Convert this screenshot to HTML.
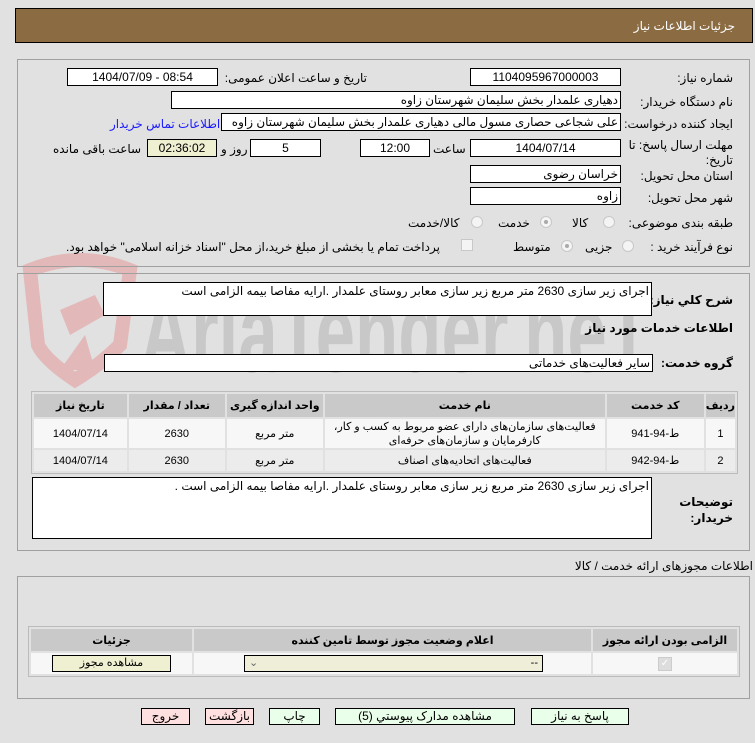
<!DOCTYPE html>
<html><head><meta charset="utf-8"><style>
body{margin:0;width:755px;height:743px;background:#e1e1e1;font-family:"Liberation Sans","DejaVu Sans",sans-serif;font-size:12px;color:#000;position:relative;overflow:hidden}
.a{position:absolute;white-space:nowrap}
.r{direction:rtl;text-align:right}
.box{position:absolute;background:#fff;border:1px solid #000;box-sizing:border-box;height:18px;line-height:16px;font-size:12px;white-space:nowrap;overflow:hidden}
.c{text-align:center}
.panel{position:absolute;border:1px solid #a0a0a0;box-sizing:border-box;left:17px;width:733px}
.lbl{position:absolute;direction:rtl;white-space:nowrap;font-size:12px}
.b{font-weight:bold;font-size:12px}
.rad{position:absolute;width:12px;height:12px;border-radius:50%;border:1px solid #c8c8c8;background:#f4f4f4;box-sizing:border-box}
.rad.on::after{content:"";position:absolute;left:3px;top:3px;width:4px;height:4px;border-radius:50%;background:#aaa}
table{border-collapse:separate;border-spacing:2px;position:absolute;font-size:11px}
td,th{padding:0;text-align:center}
th{background:#c9c9c9;font-weight:bold}
.btn{position:absolute;top:708px;height:17px;border:1px solid #000;box-sizing:border-box;line-height:15px;text-align:center;font-size:12px;background:#eaffea}
.pk{background:#ffe0e0}
</style></head><body>
<svg class="a" style="left:0;top:250px" width="700" height="140">
<path d="M30 20 Q80 0 130 20 L120 95 Q100 115 75 130 Q45 110 38 95 Z" fill="none" stroke="#e2b8b8" stroke-width="14"/>
<path d="M60 60 L95 45 L105 65 L70 85 Z" fill="#e2b8b8"/>
<path d="M85 85 L60 120 L95 120 Z" fill="#e2b8b8"/>
<text x="140" y="122" font-family="Liberation Sans Narrow, Liberation Sans, sans-serif" font-weight="bold" font-size="115" fill="#c8c8c8" textLength="510" lengthAdjust="spacingAndGlyphs">AriaTender.neT</text>
</svg>

<div class="a" style="left:15px;top:8px;width:738px;height:35px;background:#8b6b42;border:1px solid #000;box-sizing:border-box"></div>
<div class="a r" style="right:20px;top:19px;color:#fff;font-size:12px">جزئیات اطلاعات نیاز</div>

<div class="panel" style="top:59px;height:208px"></div>
<div class="lbl" style="right:22px;top:71px">شماره نیاز:</div>
<div class="box c" style="left:470px;top:68px;width:151px">1104095967000003</div>
<div class="lbl" style="right:388px;top:71px">تاریخ و ساعت اعلان عمومی:</div>
<div class="box c" style="left:67px;top:68px;width:151px">1404/07/09 - 08:54</div>

<div class="lbl" style="right:22px;top:95px">نام دستگاه خریدار:</div>
<div class="box r" style="left:171px;top:91px;width:450px;padding-right:2px">دهیاری علمدار بخش سلیمان شهرستان زاوه</div>

<div class="lbl" style="right:22px;top:117px">ایجاد کننده درخواست:</div>
<div class="box r" style="left:221px;top:113px;width:400px;padding-right:2px">علی شجاعی حصاری مسول مالی دهیاری علمدار بخش سلیمان شهرستان زاوه</div>
<div class="lbl" style="left:110px;top:117px;color:#1a1aff">اطلاعات تماس خریدار</div>

<div class="lbl" style="right:22px;top:138px;line-height:15px;text-align:right">مهلت ارسال پاسخ: تا<br>تاریخ:</div>
<div class="box c" style="left:470px;top:139px;width:151px">1404/07/14</div>
<div class="lbl" style="left:433px;top:142px">ساعت</div>
<div class="box c" style="left:360px;top:139px;width:70px">12:00</div>
<div class="box c" style="left:250px;top:139px;width:71px">5</div>
<div class="lbl" style="left:221px;top:142px">روز و</div>
<div class="box c" style="left:147px;top:139px;width:70px;background:#efefd2">02:36:02</div>
<div class="lbl" style="left:53px;top:142px">ساعت باقی مانده</div>

<div class="lbl" style="right:22px;top:169px">استان محل تحویل:</div>
<div class="box r" style="left:470px;top:165px;width:151px;padding-right:2px">خراسان رضوی</div>
<div class="lbl" style="right:22px;top:191px">شهر محل تحویل:</div>
<div class="box r" style="left:470px;top:187px;width:151px;padding-right:2px">زاوه</div>

<div class="lbl" style="right:22px;top:216px">طبقه بندی موضوعی:</div>
<div class="rad" style="left:603px;top:216px"></div><div class="lbl" style="left:572px;top:216px">کالا</div>
<div class="rad on" style="left:540px;top:216px"></div><div class="lbl" style="left:498px;top:216px">خدمت</div>
<div class="rad" style="left:471px;top:216px"></div><div class="lbl" style="left:408px;top:216px">کالا/خدمت</div>

<div class="lbl" style="right:22px;top:240px">نوع فرآیند خرید :</div>
<div class="rad" style="left:622px;top:240px"></div><div class="lbl" style="left:585px;top:240px">جزیی</div>
<div class="rad on" style="left:561px;top:240px"></div><div class="lbl" style="left:513px;top:240px">متوسط</div>
<div class="a" style="left:461px;top:239px;width:12px;height:12px;border:1px solid #c8c8c8;background:#f4f4f4;box-sizing:border-box"></div>
<div class="lbl" style="left:66px;top:240px">پرداخت تمام یا بخشی از مبلغ خرید،از محل "اسناد خزانه اسلامی" خواهد بود.</div>

<div class="panel" style="top:273px;height:278px"></div>
<div class="lbl b" style="right:22px;top:293px">شرح کلي نياز:</div>
<div class="box r" style="left:103px;top:282px;width:549px;height:34px;padding-right:2px">اجرای زیر سازی 2630 متر مربع زیر سازی معابر روستای علمدار .ارایه مفاصا بیمه الزامی است</div>
<div class="lbl b" style="right:22px;top:321px">اطلاعات خدمات مورد نیاز</div>
<div class="lbl b" style="right:22px;top:356px">گروه خدمت:</div>
<div class="box r" style="left:104px;top:354px;width:549px;padding-right:2px">سایر فعالیت‌های خدماتی</div>

<table style="left:31px;top:391px;width:707px;border:1px solid #bbb;direction:rtl">
<tr style="height:23px"><th style="width:27px">ردیف</th><th style="width:97px">کد خدمت</th><th style="width:280px">نام خدمت</th><th style="width:96px">واحد اندازه گیری</th><th style="width:96px">تعداد / مقدار</th><th>تاریخ نیاز</th></tr>
<tr style="height:29px;background:#f7f7f7"><td>1</td><td>ط-94-941</td><td style="line-height:14px">فعالیت‌های سازمان‌های دارای عضو مربوط به کسب و کار،<br>کارفرمایان و سازمان‌های حرفه‌ای</td><td>متر مربع</td><td>2630</td><td>1404/07/14</td></tr>
<tr style="height:21px;background:#ececec"><td>2</td><td>ط-94-942</td><td>فعالیت‌های اتحادیه‌های اصناف</td><td>متر مربع</td><td>2630</td><td>1404/07/14</td></tr>
</table>

<div class="lbl b" style="right:22px;top:494px;line-height:16px;text-align:right">توضیحات<br>خریدار:</div>
<div class="box r" style="left:32px;top:477px;width:620px;height:62px;padding-right:2px">اجرای زیر سازی 2630 متر مربع زیر سازی معابر روستای علمدار .ارایه مفاصا بیمه الزامی است .</div>

<div class="lbl" style="right:2px;top:559px">اطلاعات مجوزهای ارائه خدمت / کالا</div>
<div class="panel" style="top:576px;height:123px"></div>
<table style="left:28px;top:626px;width:712px;border:1px solid #bbb;direction:rtl">
<tr style="height:22px"><th style="width:144px">الزامی بودن ارائه مجوز</th><th style="width:397px">اعلام وضعیت مجوز توسط تامین کننده</th><th>جزئیات</th></tr>
<tr style="height:21px;background:#f7f7f7"><td><span style="display:inline-block;width:12px;height:12px;background:#ddd;border:1px solid #ccc;color:#fff;font-size:10px;line-height:12px">✓</span></td>
<td><div style="margin:0 auto 0 50px;width:299px;height:17px;border:1px solid #000;background:#efefd9;box-sizing:border-box;font-size:11px;line-height:15px;display:flex;justify-content:space-between;padding:0 4px;direction:ltr"><span style="color:#666">⌄</span><span>--</span></div></td>
<td><div style="margin:0 auto;width:119px;height:17px;border:1px solid #000;background:#efefd2;box-sizing:border-box;line-height:15px">مشاهده مجوز</div></td></tr>
</table>

<div class="btn" style="left:531px;width:98px">پاسخ به نیاز</div>
<div class="btn" style="left:335px;width:180px">مشاهده مدارک پیوستي (5)</div>
<div class="btn" style="left:269px;width:51px">چاپ</div>
<div class="btn pk" style="left:205px;width:49px">بازگشت</div>
<div class="btn pk" style="left:141px;width:49px">خروج</div>
</body></html>
